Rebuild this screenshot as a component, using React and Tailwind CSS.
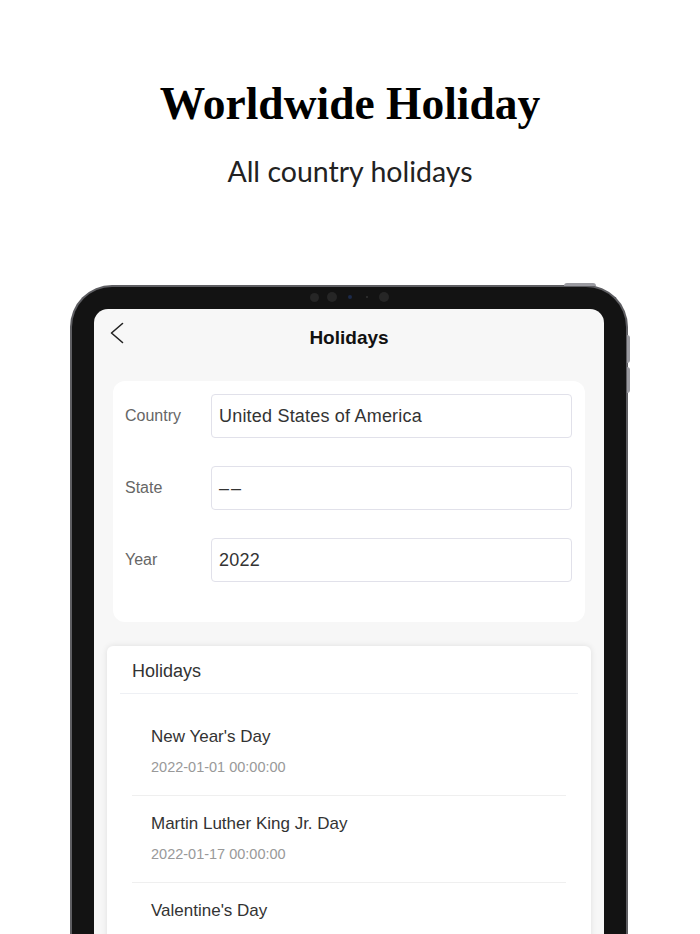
const holidays = [
  { name: "New Year's Day", date: "2022-01-01 00:00:00" },
  { name: "Martin Luther King Jr. Day", date: "2022-01-17 00:00:00" },
  { name: "Valentine's Day" },
];

const fields = [
  { label: "Country", value: "United States of America" },
  { label: "State", value: "––" },
  { label: "Year", value: "2022" },
];

function Field({ label, value }) {
  return (
    <div className="flex items-center">
      <span className="w-[98px] pl-[12px] text-[16px] text-[#666]">{label}</span>
      <div className="flex-1 h-[44px] flex items-center px-[7px] rounded-[4px] border border-[#e1e1ea] bg-white text-[18px] text-[#333] tracking-[0.2px]">
        {value === "––" ? <span className="tracking-[2px]">{value}</span> : value}
      </div>
    </div>
  );
}

export default function App() {
  return (
    <div className="w-[700px] h-[934px] overflow-hidden bg-white relative">
      {/* Marketing header */}
      <div className="pt-[78px] flex flex-col items-center">
        <h1
          className="text-[45.5px] leading-[52px] font-bold text-black"
          style={{ fontFamily: '"Liberation Serif", serif' }}
        >
          Worldwide Holiday
        </h1>
        <p
          className="mt-[23px] text-[28.5px] leading-[36px] text-[#222]"
          style={{ fontFamily: 'Lato, "Noto Sans", sans-serif' }}
        >
          All country holidays
        </p>
      </div>

      {/* Device */}
      <div className="relative ml-[70px] mt-[96px] w-[558px]">
        {/* side buttons */}
        <div className="absolute -top-[2px] right-[32px] w-[32px] h-[3px] rounded-t-sm bg-[#9a9aa0]" />
        <div className="absolute top-[50px] -right-[2px] w-[3px] h-[28px] rounded-r-sm bg-[#9a9aa0]" />
        <div className="absolute top-[82px] -right-[2px] w-[3px] h-[26px] rounded-r-sm bg-[#9a9aa0]" />

        <div
          className="rounded-t-[42px] border-2 border-b-0 border-[#5e5e62] bg-[#131313] px-[22px] pt-[22px] h-[660px]"
          style={{ fontFamily: '"Liberation Sans", Arial, sans-serif' }}
        >
          {/* camera */}
          <div className="absolute top-[6px] left-0 right-0 flex justify-center items-center gap-[8px] h-[12px]">
            <span className="w-[9px] h-[9px] rounded-full bg-[#262626]" />
            <span className="w-[10px] h-[10px] rounded-full bg-[#262626]" />
            <span className="w-[4px] h-[4px] rounded-full bg-[#1c2a4a] mx-[3px]" />
            <span className="w-[2px] h-[2px] rounded-full bg-[#333] mx-[3px]" />
            <span className="w-[10px] h-[10px] rounded-full bg-[#262626]" />
          </div>

          <div className="rounded-t-[14px] bg-[#f7f7f7] h-full">
            {/* Nav */}
            <div className="relative h-[72px] flex items-center justify-center">
              <svg
                className="absolute left-[16px] top-[13px]"
                width="14"
                height="22"
                viewBox="0 0 14 22"
                fill="none"
                stroke="#222"
                strokeWidth="1.6"
                strokeLinecap="round"
                strokeLinejoin="round"
              >
                <path d="M12.5 1.5 L1.5 11 L12.5 20.5" />
              </svg>
              <span className="text-[19px] font-bold text-[#111] -mt-[16px] pt-[2px]">Holidays</span>
            </div>

            {/* Form card */}
            <div className="mx-[19px] rounded-[12px] bg-white pt-[13px] pb-[40px] pr-[13px] flex flex-col gap-[28px]">
              {fields.map((f) => (
                <Field key={f.label} {...f} />
              ))}
            </div>

            {/* Holidays list */}
            <div className="mx-[13px] mt-[24px] rounded-[6px] bg-white shadow-[0_0_6px_rgba(0,0,0,0.1)]">
              <div className="mx-[13px] pt-[13px] pb-[10px] pl-[12px] border-b border-[#eef0f4] text-[18px] leading-[24px] text-[#333]">
                Holidays
              </div>
              <div className="pt-[15px] mx-[25px]">
                {holidays.map((h) => (
                  <div key={h.name} className="pl-[19px] pt-[16px] pb-[18px] border-b border-[#efefef]">
                    <div className="text-[17px] leading-[24px] text-[#333]">{h.name}</div>
                    {h.date && (
                      <div className="mt-[8px] text-[14.5px] leading-[20px] text-[#999]">{h.date}</div>
                    )}
                  </div>
                ))}
              </div>
            </div>
          </div>
        </div>
      </div>
    </div>
  );
}
